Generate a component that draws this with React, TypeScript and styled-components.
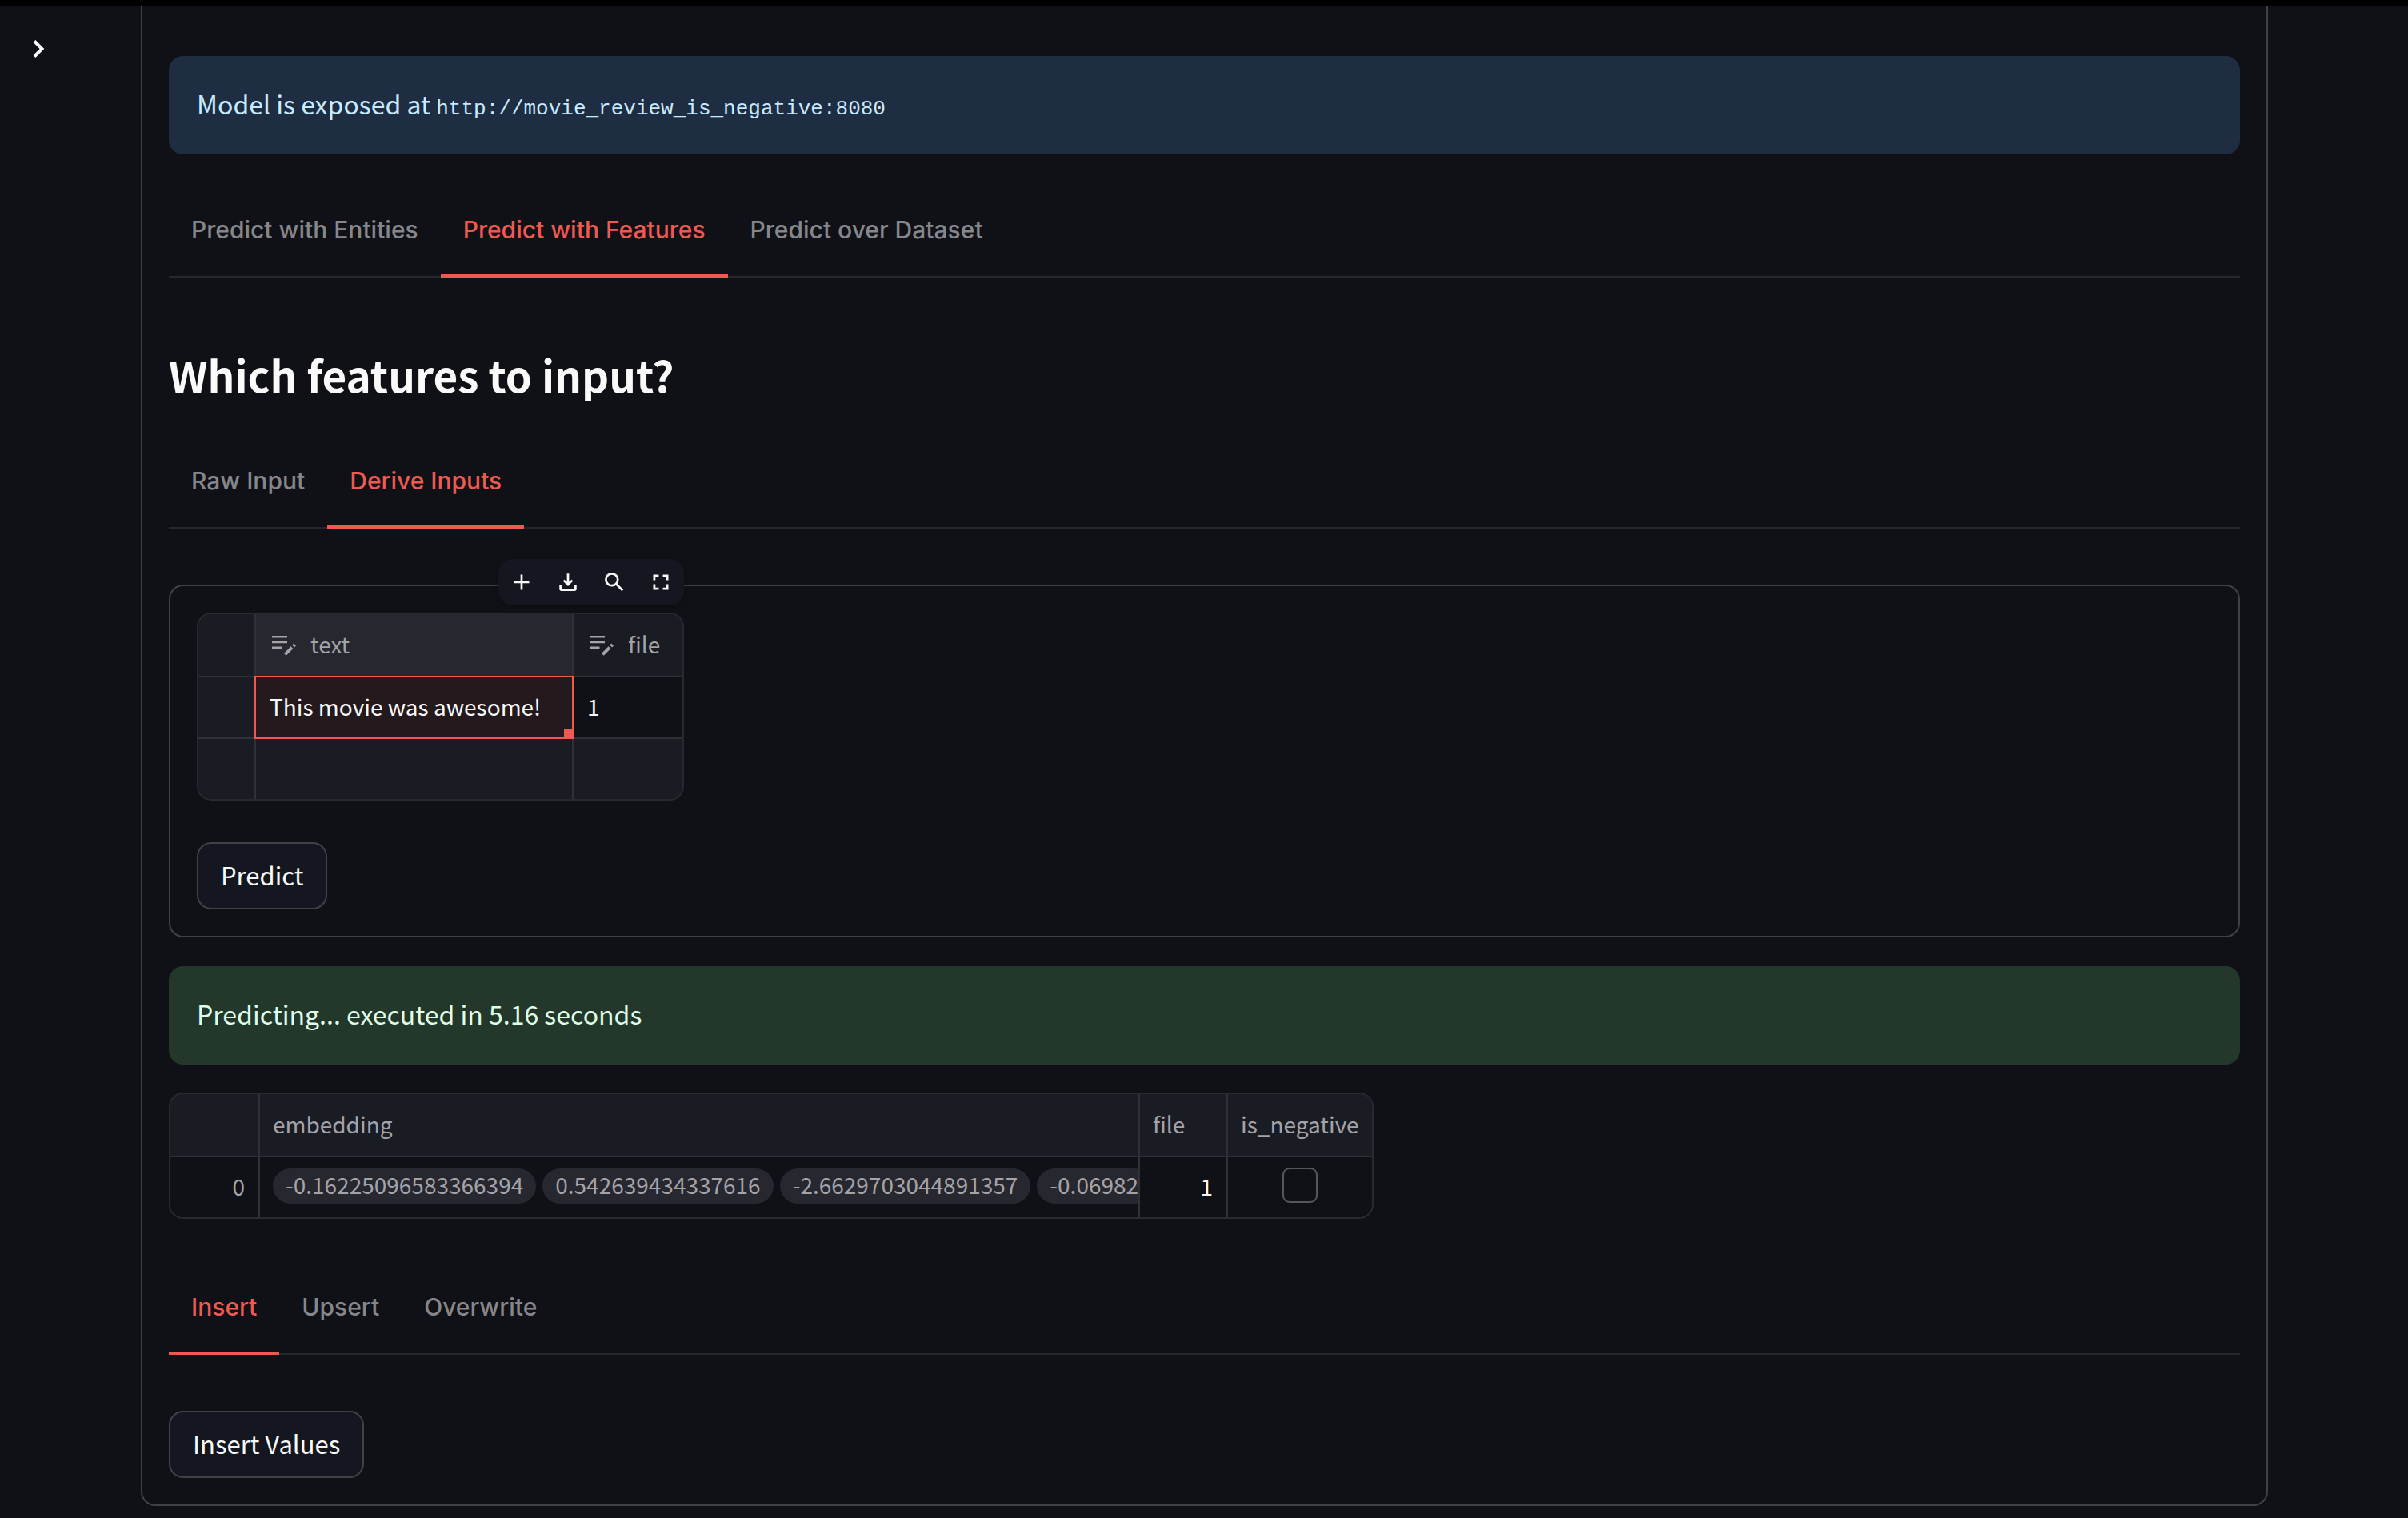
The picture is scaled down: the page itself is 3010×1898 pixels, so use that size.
import React, { useState } from "react";
import styled, { createGlobalStyle } from "styled-components";

const color = {
  page: "#101116",
  surface: "#1a1c24",
  raised: "#272730",
  control: "#141720",
  line: "#404146",
  rule: "#26272c",
  grid: "#303136",
  text: "#fafafa",
  muted: "#a3a3a8",
  tab: "#86878b",
  accent: "#ef5a50",
};

const sans = `"Noto Sans CJK SC", "Noto Sans", sans-serif`;
const ui = `Inter, "Liberation Sans", sans-serif`;
const mono = `"Liberation Mono", monospace`;

const GlobalStyle = createGlobalStyle`
  *, *::before, *::after { box-sizing: border-box; }
  body {
    margin: 0;
    background: ${color.page};
    color: ${color.text};
    font-family: ${sans};
    font-size: 31px;
    -webkit-font-smoothing: antialiased;
  }
  button { font: inherit; color: inherit; cursor: pointer; }
`;

const TopEdge = styled.div`
  height: 8px;
  background: #000;
`;

const Layout = styled.div`
  display: grid;
  grid-template-columns: 176px minmax(0, 1fr) 175px;
  padding-bottom: 15px;
`;

const SidebarToggle = styled.button`
  justify-self: start;
  align-self: start;
  display: flex;
  margin: 37px 0 0 32px;
  padding: 0;
  border: 0;
  background: none;
`;

const Panel = styled.main`
  display: flex;
  flex-direction: column;
  align-items: stretch;
  padding: 62px 33px 33px;
  border: 2px solid ${color.line};
  border-top: 0;
  border-radius: 0 0 18px 18px;
`;

const Alert = styled.div<{ $tone: "info" | "success" }>`
  padding: 31px 35px 36px;
  border-radius: 18px;
  font-size: 32px;
  line-height: 56px;
  background: ${(p) => (p.$tone === "info" ? "#1f2d43" : "#23382b")};
  color: ${(p) => (p.$tone === "info" ? "#c7ebff" : "#dffde9")};
`;

const Code = styled.code`
  font-family: ${mono};
  font-size: 26px;
  line-height: 1;
`;

const TabList = styled.div`
  display: flex;
  margin: 35px 0 70px;
  border-bottom: 2px solid ${color.rule};
`;

const TabButton = styled.button<{ $active: boolean }>`
  height: 119px;
  margin-bottom: -2px;
  padding: 0 28px 2px;
  border: 0;
  background: none;
  font-family: ${ui};
  font-size: 30px;
  font-weight: 500;
  color: ${(p) => (p.$active ? color.accent : color.tab)};
  box-shadow: ${(p) => (p.$active ? `inset 0 -4px 0 ${color.accent}` : "none")};
`;

const Heading = styled.h2`
  margin: 0;
  padding: 14px 0 2px;
  font-size: 53px;
  font-weight: 700;
  line-height: 74px;
`;

const Form = styled.form`
  display: flex;
  flex-direction: column;
  align-items: flex-start;
  gap: 52px;
  margin-bottom: 36px;
  padding: 33px;
  border: 2px solid ${color.line};
  border-radius: 18px;
`;

const GridHolder = styled.div`
  position: relative;
`;

const Toolbar = styled.div`
  position: absolute;
  right: 0;
  bottom: calc(100% + 9px);
  display: flex;
  border-radius: 18px;
  background: ${color.control};
  box-shadow: 0 2px 8px rgba(0, 0, 0, 0.25);
`;

const ToolButton = styled.button`
  display: grid;
  place-items: center;
  width: 58px;
  height: 58px;
  padding: 0;
  border: 0;
  background: none;
`;

const GridFrame = styled.div`
  width: max-content;
  max-width: 100%;
  overflow: hidden;
  border: 2px solid #292a2f;
  border-radius: 18px;
`;

const Grid = styled.table<{ $width: number }>`
  width: ${(p) => p.$width}px;
  table-layout: fixed;
  border-collapse: separate;
  border-spacing: 0;
  font-size: 28px;
  line-height: 40px;
`;

const HeadCell = styled.th<{ $width: number; $selected?: boolean }>`
  width: ${(p) => p.$width}px;
  height: 79px;
  padding: 0 16px 3px;
  border-right: 2px solid ${color.grid};
  border-bottom: 2px solid ${color.grid};
  background: ${(p) => (p.$selected ? color.raised : color.surface)};
  color: ${color.muted};
  font-weight: 400;
  text-align: left;
  white-space: nowrap;
  &:last-child { border-right: 0; }
`;

const HeadLabel = styled.span`
  display: flex;
  align-items: center;
  gap: 16px;
`;

const Cell = styled.td<{ $shaded?: boolean; $selected?: boolean; $muted?: boolean; $align?: string }>`
  position: relative;
  height: 77px;
  padding: 0 17px 3px;
  border-right: 2px solid ${color.grid};
  border-bottom: 2px solid ${color.grid};
  background: ${(p) => (p.$selected ? "#24191d" : p.$shaded ? color.surface : color.page)};
  color: ${(p) => (p.$muted ? color.muted : color.text)};
  text-align: ${(p) => p.$align ?? "left"};
  white-space: nowrap;
  &:last-child { border-right: 0; }
  tr:last-child > & { height: 75px; border-bottom: 0; }
`;

const Selection = styled.span`
  position: absolute;
  inset: -2px;
  z-index: 1;
  border: 2px solid ${color.accent};
  pointer-events: none;
  &::after {
    content: "";
    position: absolute;
    right: -2px;
    bottom: -2px;
    width: 12px;
    height: 12px;
    background: ${color.accent};
  }
`;

const PillRow = styled.div`
  display: flex;
  gap: 8px;
  margin: 0 -17px 0 -1px;
  overflow: hidden;
`;

const Pill = styled.span`
  flex: none;
  padding: 0 16px 4px;
  border-radius: 22px;
  background: ${color.raised};
`;

const CheckBox = styled.input`
  appearance: none;
  display: block;
  width: 44px;
  height: 44px;
  margin: -2px auto 0;
  border: 2px solid #56575b;
  border-radius: 9px;
  background: transparent;
  &:checked { background: ${color.accent}; }
`;

const ActionButton = styled.button`
  align-self: flex-start;
  padding: 13px 28px 15px;
  border: 2px solid #404249;
  border-radius: 18px;
  background: ${color.control};
  line-height: 52px;
`;

const ResultGrid = styled.div`
  margin: 35px 0 16px;
`;

const ButtonRow = styled.div`
  display: flex;
`;

const ChevronIcon = () => (
  <svg width="32" height="32" viewBox="0 0 32 32" fill="none" stroke="#fff" strokeWidth="4" aria-hidden="true">
    <path d="M11 6.5 20.5 16 11 25.5" />
  </svg>
);

const PlusIcon = () => (
  <svg width="32" height="32" viewBox="0 0 32 32" fill="none" stroke="#fafafa" strokeWidth="2.7" aria-hidden="true">
    <path d="M16 6.5v19M6.5 16h19" />
  </svg>
);

const DownloadIcon = () => (
  <svg width="32" height="32" viewBox="0 0 32 32" fill="none" stroke="#fafafa" strokeWidth="2.7" aria-hidden="true">
    <path d="M16 5.3v14M10.6 13.6 16 19l5.4-5.4M6.6 20v4.2a1.4 1.4 0 0 0 1.4 1.4h16a1.4 1.4 0 0 0 1.4-1.4V20" />
  </svg>
);

const SearchIcon = () => (
  <svg width="32" height="32" viewBox="0 0 32 32" fill="none" stroke="#fafafa" strokeWidth="2.7" aria-hidden="true">
    <circle cx="12.8" cy="12.8" r="7.4" />
    <path d="m18 18 8.3 8.3" />
  </svg>
);

const FullscreenIcon = () => (
  <svg width="32" height="32" viewBox="0 0 32 32" fill="none" stroke="#fafafa" strokeWidth="2.8" aria-hidden="true">
    <path d="M7.9 13.4V7.9h5.5M18.6 7.9h5.5v5.5M24.1 18.6v5.5h-5.5M13.4 24.1H7.9v-5.5" />
  </svg>
);

const EditableIcon = () => (
  <svg width="36" height="36" viewBox="0 0 36 36" fill="none" stroke="currentColor" strokeWidth="2.4" aria-hidden="true">
    <path d="M4 9.2h19M4 16h19M4 22.8h12.5" />
    <path d="M20.3 31.3 29 22.6" strokeWidth="4" />
    <path d="m30.6 21 2-2" strokeWidth="4" />
  </svg>
);

function Tabs({ label, items, initial }: { label: string; items: string[]; initial: string }) {
  const [active, setActive] = useState(initial);
  return (
    <TabList role="tablist" aria-label={label}>
      {items.map((item) => (
        <TabButton
          key={item}
          type="button"
          role="tab"
          aria-selected={item === active}
          $active={item === active}
          onClick={() => setActive(item)}
        >
          {item}
        </TabButton>
      ))}
    </TabList>
  );
}

const tools = [
  { label: "Add row", Icon: PlusIcon },
  { label: "Download as CSV", Icon: DownloadIcon },
  { label: "Search", Icon: SearchIcon },
  { label: "Fullscreen", Icon: FullscreenIcon },
];

const embedding = ["-0.16225096583366394", "0.542639434337616", "-2.6629703044891357", "-0.06982"];

export default function App() {
  return (
    <>
      <GlobalStyle />
      <TopEdge />
      <Layout>
        <SidebarToggle type="button" aria-label="Open sidebar">
          <ChevronIcon />
        </SidebarToggle>
        <Panel>
          <Alert $tone="info" role="status">
            Model is exposed at <Code>http://movie_review_is_negative:8080</Code>
          </Alert>
          <Tabs
            label="Prediction source"
            items={["Predict with Entities", "Predict with Features", "Predict over Dataset"]}
            initial="Predict with Features"
          />
          <section>
            <Heading>Which features to input?</Heading>
            <Tabs label="Feature input" items={["Raw Input", "Derive Inputs"]} initial="Derive Inputs" />
            <Form onSubmit={(e) => e.preventDefault()}>
              <GridHolder>
                <Toolbar role="toolbar" aria-label="Table tools">
                  {tools.map(({ label, Icon }) => (
                    <ToolButton key={label} type="button" aria-label={label}>
                      <Icon />
                    </ToolButton>
                  ))}
                </Toolbar>
                <GridFrame>
                  <Grid $width={605}>
                    <thead>
                      <tr>
                        <HeadCell $width={72} />
                        <HeadCell $width={397} $selected>
                          <HeadLabel><EditableIcon />text</HeadLabel>
                        </HeadCell>
                        <HeadCell $width={136}>
                          <HeadLabel><EditableIcon />file</HeadLabel>
                        </HeadCell>
                      </tr>
                    </thead>
                    <tbody>
                      <tr>
                        <Cell $shaded />
                        <Cell $selected>This movie was awesome!<Selection /></Cell>
                        <Cell>1</Cell>
                      </tr>
                      <tr>
                        <Cell $shaded />
                        <Cell $shaded />
                        <Cell $shaded />
                      </tr>
                    </tbody>
                  </Grid>
                </GridFrame>
              </GridHolder>
              <ActionButton type="submit">Predict</ActionButton>
            </Form>
          </section>
          <Alert $tone="success" role="status">Predicting... executed in 5.16 seconds</Alert>
          <ResultGrid>
            <GridFrame>
              <Grid $width={1502}>
                <thead>
                  <tr>
                    <HeadCell $width={112} />
                    <HeadCell $width={1100}>embedding</HeadCell>
                    <HeadCell $width={110}>file</HeadCell>
                    <HeadCell $width={180}>is_negative</HeadCell>
                  </tr>
                </thead>
                <tbody>
                  <tr>
                    <Cell $muted $align="right">0</Cell>
                    <Cell $muted>
                      <PillRow>
                        {embedding.map((value) => (
                          <Pill key={value}>{value}</Pill>
                        ))}
                      </PillRow>
                    </Cell>
                    <Cell $align="right">1</Cell>
                    <Cell><CheckBox type="checkbox" aria-label="is_negative" /></Cell>
                  </tr>
                </tbody>
              </Grid>
            </GridFrame>
          </ResultGrid>
          <Tabs label="Write mode" items={["Insert", "Upsert", "Overwrite"]} initial="Insert" />
          <ButtonRow>
            <ActionButton type="button">Insert Values</ActionButton>
          </ButtonRow>
        </Panel>
      </Layout>
    </>
  );
}
